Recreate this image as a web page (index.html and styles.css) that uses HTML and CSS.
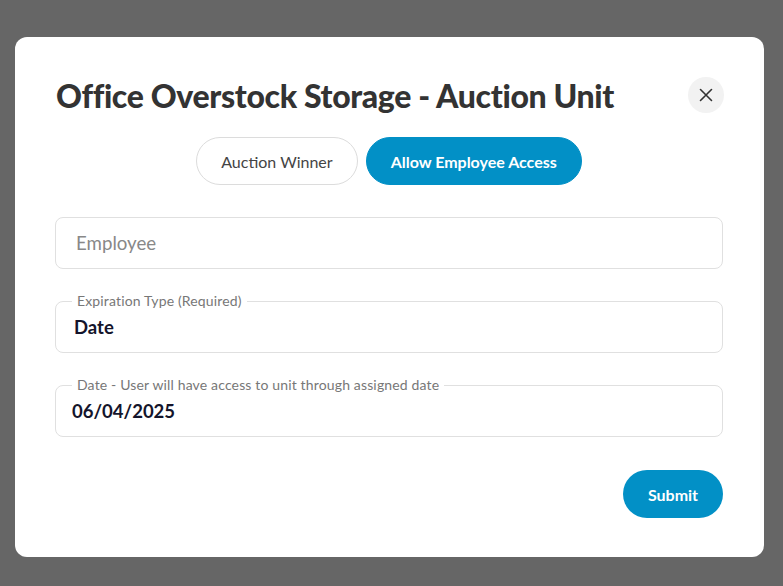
FILE: index.html
```html
<!DOCTYPE html>
<html>
  <head>
    <title>Allow Employee Access</title>
    <link rel="stylesheet" href="styles.css">
  </head>
  <body>
    <div class="overlay">
      <div class="modal">
        <div class="modal-head">
          <h1 class="modal-title">Office Overstock Storage - Auction Unit</h1>
          <button class="close-btn" aria-label="Close">
            <svg width="14" height="14" viewBox="0 0 14 14"><path d="M1.5 1.5 L12.5 12.5 M12.5 1.5 L1.5 12.5" stroke="#333" stroke-width="1.6" stroke-linecap="round"/></svg>
          </button>
        </div>

        <div class="tabs">
          <button class="tab">Auction Winner</button>
          <button class="tab tab-active">Allow Employee Access</button>
        </div>

        <div class="fields">
          <div class="field">
            <span class="field-placeholder">Employee</span>
          </div>
          <div class="field">
            <span class="field-label">Expiration Type (Required)</span>
            <span class="field-value">Date</span>
          </div>
          <div class="field">
            <span class="field-label">Date - User will have access to unit through assigned date</span>
            <span class="field-value field-date">06/04/2025</span>
          </div>
        </div>

        <div class="modal-foot">
          <button class="submit-btn">Submit</button>
        </div>
      </div>
    </div>
  </body>
</html>
```

FILE: styles.css
```css
html, body {
  margin: 0;
  padding: 0;
}
body {
  background: #666666;
  font-family: 'Lato', 'Noto Sans', sans-serif;
  color: #333;
}
button {
  font-family: inherit;
  border: none;
  background: none;
  cursor: pointer;
  padding: 0;
}

.overlay {
  width: 783px;
  height: 586px;
  padding: 37px 0 0 15px;
  box-sizing: border-box;
}
.modal {
  width: 749px;
  height: 520px;
  box-sizing: border-box;
  background: #fff;
  border-radius: 12px;
  padding: 40px 41px 40px 40px;
  display: flex;
  flex-direction: column;
}

.modal-head {
  display: flex;
  align-items: center;
  justify-content: space-between;
  height: 36px;
}
.modal-title {
  margin: 0 0 0 1px;
  font-size: 32px;
  font-weight: 900;
  color: #333;
  letter-spacing: -0.35px;
}
.close-btn {
  width: 36px;
  height: 36px;
  border-radius: 50%;
  background: #f2f2f2;
  display: flex;
  align-items: center;
  justify-content: center;
  margin-right: -1px;
}

.tabs {
  display: flex;
  justify-content: center;
  gap: 8px;
  margin-top: 24px;
}
.tab {
  height: 48px;
  padding: 0 24px;
  border-radius: 24px;
  border: 1px solid #dcdcdc;
  font-size: 16px;
  color: #444;
  box-sizing: border-box;
}
.tab-active {
  background: #0290c6;
  border-color: #0290c6;
  color: #fff;
  font-weight: 700;
}

.fields {
  display: flex;
  flex-direction: column;
  gap: 32px;
  margin-top: 32px;
}
.field {
  position: relative;
  height: 52px;
  border: 1px solid #e0e0e0;
  border-radius: 8px;
  box-sizing: border-box;
  display: flex;
  align-items: center;
  padding: 0 20px;
}
.field-placeholder {
  font-size: 18.7px;
  color: #888;
}
.field-label {
  position: absolute;
  left: 16px;
  top: -10px;
  background: #fff;
  padding: 0 5px;
  font-size: 14px;
  line-height: 17px;
  letter-spacing: 0.15px;
  color: #777;
}
.field-value {
  font-size: 18.5px;
  font-weight: 700;
  color: #14142b;
  margin-left: -2px;
  margin-top: -1px;
}
.field-date {
  margin-left: -4px;
}

.modal-foot {
  display: flex;
  justify-content: flex-end;
  margin-top: 33px;
}
.submit-btn {
  width: 100px;
  height: 48px;
  border-radius: 24px;
  background: #0290c6;
  color: #fff;
  font-size: 16px;
  font-weight: 700;
}
```
